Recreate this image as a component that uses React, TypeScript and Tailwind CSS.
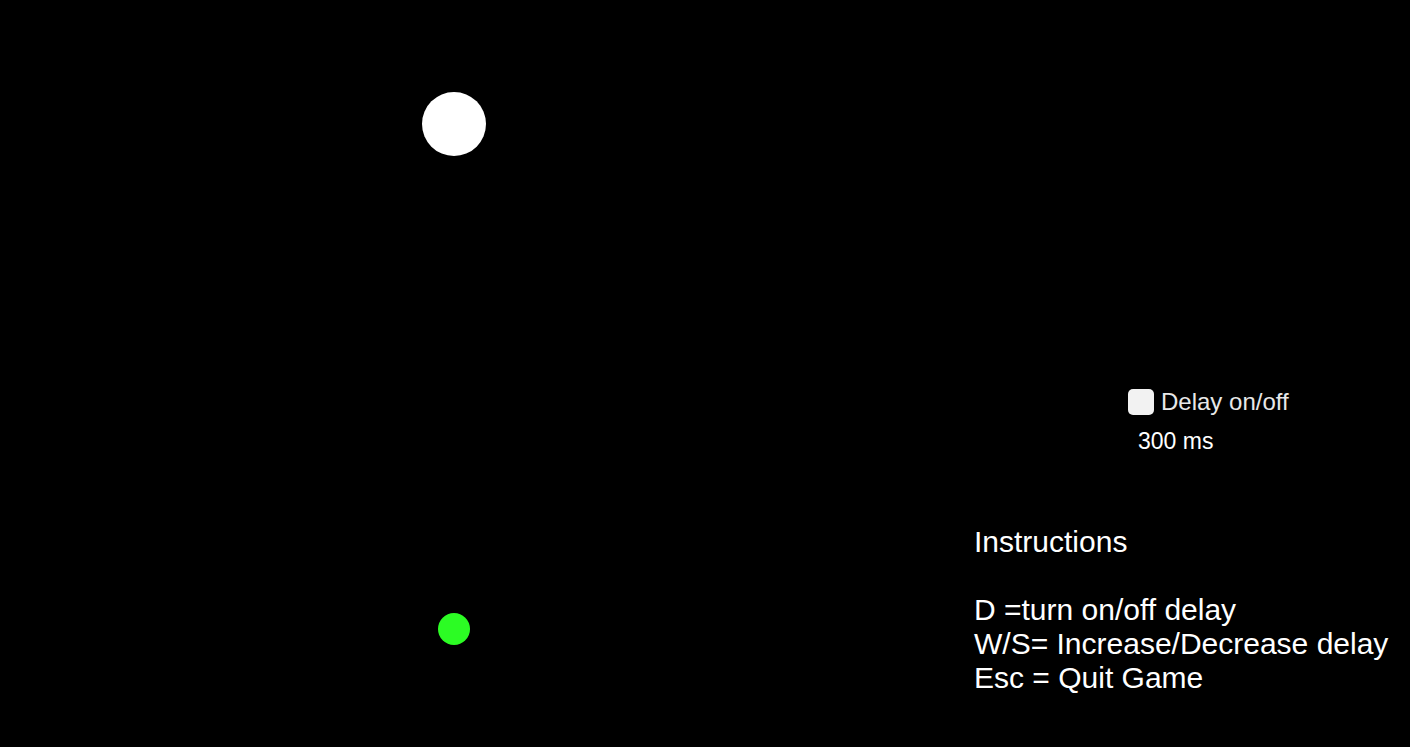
export default function App() {
  return (
    <div className="flex h-[747px] w-full overflow-hidden bg-black font-['Liberation_Sans',Arial,sans-serif] text-white">
      {/* game scene */}
      <div className="relative flex-1">
        <div className="absolute left-[422px] top-[92px] h-[64px] w-[64px] rounded-full bg-white" />
        <div className="absolute left-[438px] top-[613px] h-[32px] w-[32px] rounded-full bg-[#2cfc24]" />
      </div>

      {/* hud */}
      <aside className="flex w-[436px] flex-col pt-[389px]">
        <div className="ml-[154px] flex flex-col">
          <label className="flex items-center gap-[7px]">
            <span className="h-[26px] w-[26px] rounded-[5px] bg-[#f2f2f2]" />
            <span className="text-[24px] leading-[26px] text-[#e8e8e8]">Delay on/off</span>
          </label>
          <span className="ml-[10px] mt-[13px] text-[23px] leading-[26px]">300 ms</span>
        </div>

        <div className="mt-[71px] text-[30px] leading-[34px]">
          <p>Instructions</p>
          <p>&nbsp;</p>
          <p>D =turn on/off delay</p>
          <p>W/S= Increase/Decrease delay</p>
          <p>Esc = Quit Game</p>
        </div>
      </aside>
    </div>
  );
}
